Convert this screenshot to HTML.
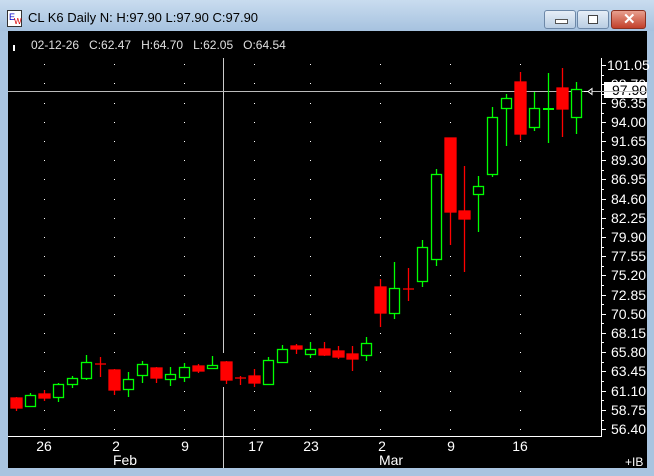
<!DOCTYPE html>
<html><head><style>
html,body{margin:0;padding:0;}
body{width:654px;height:476px;overflow:hidden;background:#a9c4e0;font-family:"Liberation Sans",sans-serif;position:relative;}
.tb{position:absolute;left:0;top:0;width:654px;height:31px;background:linear-gradient(#c9dcef,#a6c2df);}
.title{position:absolute;left:28px;top:10px;font-size:13px;color:#000;}
.btn{position:absolute;top:10px;height:17px;border:1px solid #6d88a8;border-radius:3px;background:linear-gradient(#e6eef7,#b9cde3);}
.chart{position:absolute;left:8px;top:31px;width:639px;height:437px;background:#000;}
</style></head><body>
<div class="tb"></div>
<svg style="position:absolute;left:7px;top:10px" width="17" height="17"><rect x="0.5" y="0.5" width="14" height="16" fill="#fff" stroke="#333"/><text x="2" y="10" font-size="9" fill="#00c" font-family="Liberation Sans">E</text><text x="7" y="14" font-size="8" fill="#d00" font-family="Liberation Sans">W</text></svg>
<div class="title">CL K6 Daily N: H:97.90 L:97.90 C:97.90</div>
<div class="btn" style="left:544px;width:30px"><div style="position:absolute;left:10px;top:8px;width:11px;height:3px;background:#fff;border:1px solid #555"></div></div>
<div class="btn" style="left:577px;width:30px"><div style="position:absolute;left:10px;top:4px;width:8px;height:7px;border:1px solid #444;background:#fff"></div></div>
<div class="btn" style="left:611px;width:33px;background:linear-gradient(#e8a08f,#c2402a);border-color:#8a3020"><div style="position:absolute;left:11px;top:-1px;color:#fff;font-weight:bold;font-size:15px">✕</div></div>
<div class="chart"></div>
<svg style="position:absolute;left:0;top:0" width="654" height="476" font-family="Liberation Sans">
<text x="31" y="49" font-size="12" fill="#e0e0e0">02-12-26&#160;&#160;&#160;C:62.47&#160;&#160;&#160;H:64.70&#160;&#160;&#160;L:62.05&#160;&#160;&#160;O:64.54</text>
<rect x="13" y="45" width="2" height="6" fill="#fff"/>
<g fill="#fff">
<g id="dc">
<rect x="44" y="64" width="1" height="1"/><rect x="44" y="83" width="1" height="1"/><rect x="44" y="103" width="1" height="1"/><rect x="44" y="122" width="1" height="1"/><rect x="44" y="141" width="1" height="1"/><rect x="44" y="160" width="1" height="1"/><rect x="44" y="179" width="1" height="1"/><rect x="44" y="199" width="1" height="1"/><rect x="44" y="218" width="1" height="1"/><rect x="44" y="237" width="1" height="1"/><rect x="44" y="256" width="1" height="1"/><rect x="44" y="275" width="1" height="1"/><rect x="44" y="295" width="1" height="1"/><rect x="44" y="314" width="1" height="1"/><rect x="44" y="333" width="1" height="1"/><rect x="44" y="352" width="1" height="1"/><rect x="44" y="371" width="1" height="1"/><rect x="44" y="391" width="1" height="1"/><rect x="44" y="410" width="1" height="1"/><rect x="44" y="429" width="1" height="1"/>
</g>
<use href="#dc" x="70"/><use href="#dc" x="140"/><use href="#dc" x="210"/><use href="#dc" x="266"/><use href="#dc" x="336"/><use href="#dc" x="406"/><use href="#dc" x="476"/>
</g>
<line x1="223.5" y1="58" x2="223.5" y2="353" stroke="#ccc"/>
<line x1="223.5" y1="387" x2="223.5" y2="468" stroke="#ccc"/>
<line x1="8" y1="436.5" x2="601" y2="436.5" stroke="#fff"/>
<line x1="601.5" y1="58" x2="601.5" y2="437" stroke="#fff"/>
<g stroke="#fff">
<path d="M601 65.5h5M601 84.5h5M601 103.5h5M601 122.5h5M601 141.5h5M601 160.5h5M601 179.5h5M601 199.5h5M601 218.5h5M601 237.5h5M601 256.5h5M601 275.5h5M601 295.5h5M601 314.5h5M601 333.5h5M601 352.5h5M601 371.5h5M601 391.5h5M601 410.5h5M601 429.5h5"/>
<path d="M601 75.5h3M601 94.5h3M601 113.5h3M601 132.5h3M601 151.5h3M601 170.5h3M601 189.5h3M601 209.5h3M601 228.5h3M601 247.5h3M601 266.5h3M601 285.5h3M601 304.5h3M601 323.5h3M601 342.5h3M601 362.5h3M601 381.5h3M601 400.5h3M601 420.5h3"/>
</g>
<g font-size="14" fill="#fff">
<text x="607" y="70">101.05</text><text x="611" y="89">98.70</text><text x="611" y="108">96.35</text><text x="611" y="127">94.00</text><text x="611" y="146">91.65</text><text x="611" y="165">89.30</text><text x="611" y="184">86.95</text><text x="611" y="204">84.60</text><text x="611" y="223">82.25</text><text x="611" y="242">79.90</text><text x="611" y="261">77.55</text><text x="611" y="280">75.20</text><text x="611" y="300">72.85</text><text x="611" y="319">70.50</text><text x="611" y="338">68.15</text><text x="611" y="357">65.80</text><text x="611" y="376">63.45</text><text x="611" y="396">61.10</text><text x="611" y="415">58.75</text><text x="611" y="434">56.40</text>
</g>
<rect x="604" y="82" width="43" height="16" fill="#fff"/>
<text x="612" y="95" font-size="14" fill="#000">97.90</text>
<line x1="8" y1="91.5" x2="647" y2="91.5" stroke="#bbb"/>
<path d="M584 91.5h4l4-3v6l-4-3" stroke="#fff" fill="#000"/>
<g font-size="14" fill="#fff" text-anchor="middle">
<text x="44" y="451">26</text><text x="116" y="451">2</text><text x="185" y="451">9</text><text x="256" y="451">17</text><text x="311" y="451">23</text><text x="382" y="451">2</text><text x="451" y="451">9</text><text x="520" y="451">16</text>
<text x="125" y="465">Feb</text><text x="391" y="465">Mar</text>
</g>
<text x="625" y="466" font-size="12" fill="#fff">+IB</text>
<g stroke-width="1.3">
<!-- candles: c, wt, wb, bt, bb -->
<g stroke="#f00" fill="#f00">
<line x1="16.5" y1="397" x2="16.5" y2="411"/><rect x="11" y="398" width="11" height="10"/>
<line x1="44.5" y1="390" x2="44.5" y2="401"/><rect x="39" y="394" width="11" height="4"/>
<line x1="100.5" y1="357" x2="100.5" y2="377"/><line x1="95" y1="364" x2="106" y2="364"/>
<line x1="114.5" y1="369" x2="114.5" y2="395"/><rect x="109" y="370" width="11" height="20"/>
<line x1="156.5" y1="367" x2="156.5" y2="383"/><rect x="151" y="368" width="11" height="10"/>
<line x1="198.5" y1="364" x2="198.5" y2="373"/><rect x="193" y="366" width="11" height="5"/>
<line x1="226.5" y1="361" x2="226.5" y2="384"/><rect x="221" y="362" width="11" height="18"/>
<line x1="240.5" y1="376" x2="240.5" y2="385"/><line x1="235" y1="378" x2="246" y2="378"/>
<line x1="254.5" y1="369" x2="254.5" y2="387"/><rect x="249" y="376" width="11" height="7"/>
<line x1="296.5" y1="344" x2="296.5" y2="354"/><rect x="291" y="346" width="11" height="3"/>
<line x1="324.5" y1="342" x2="324.5" y2="356"/><rect x="319" y="349" width="11" height="6"/>
<line x1="338.5" y1="346" x2="338.5" y2="359"/><rect x="333" y="351" width="11" height="6"/>
<line x1="352.5" y1="346" x2="352.5" y2="371"/><rect x="347" y="354" width="11" height="5"/>
<line x1="380.5" y1="279" x2="380.5" y2="327"/><rect x="375" y="287" width="11" height="26"/>
<line x1="408.5" y1="268" x2="408.5" y2="301"/><line x1="403" y1="289" x2="414" y2="289"/>
<line x1="450.5" y1="138" x2="450.5" y2="245"/><rect x="445" y="138" width="11" height="74"/>
<line x1="464.5" y1="166" x2="464.5" y2="272"/><rect x="459" y="211" width="11" height="8"/>
<line x1="520.5" y1="72" x2="520.5" y2="140"/><rect x="515" y="82" width="11" height="52"/>
<line x1="562.5" y1="68" x2="562.5" y2="137"/><rect x="557" y="88" width="11" height="21"/>
</g>
<g stroke="#0f0" fill="#000">
<line x1="30.5" y1="393" x2="30.5" y2="406"/><rect x="25.5" y="395.5" width="10" height="11"/>
<line x1="58.5" y1="383" x2="58.5" y2="402"/><rect x="53.5" y="384.5" width="10" height="13"/>
<line x1="72.5" y1="376" x2="72.5" y2="388"/><rect x="67.5" y="378.5" width="10" height="6"/>
<line x1="86.5" y1="355" x2="86.5" y2="380"/><rect x="81.5" y="362.5" width="10" height="16"/>
<line x1="128.5" y1="372" x2="128.5" y2="397"/><rect x="123.5" y="379.5" width="10" height="10"/>
<line x1="142.5" y1="361" x2="142.5" y2="383"/><rect x="137.5" y="364.5" width="10" height="11"/>
<line x1="170.5" y1="367" x2="170.5" y2="386"/><rect x="165.5" y="374.5" width="10" height="5"/>
<line x1="184.5" y1="363" x2="184.5" y2="382"/><rect x="179.5" y="367.5" width="10" height="10"/>
<line x1="212.5" y1="356" x2="212.5" y2="368"/><rect x="207.5" y="365.5" width="10" height="3"/>
<line x1="268.5" y1="357" x2="268.5" y2="385"/><rect x="263.5" y="360.5" width="10" height="24"/>
<line x1="282.5" y1="345" x2="282.5" y2="363"/><rect x="277.5" y="349.5" width="10" height="13"/>
<line x1="310.5" y1="342" x2="310.5" y2="358"/><rect x="305.5" y="349.5" width="10" height="5"/>
<line x1="366.5" y1="337" x2="366.5" y2="361"/><rect x="361.5" y="343.5" width="10" height="12"/>
<line x1="394.5" y1="262" x2="394.5" y2="319"/><rect x="389.5" y="288.5" width="10" height="25"/>
<line x1="422.5" y1="240" x2="422.5" y2="287"/><rect x="417.5" y="247.5" width="10" height="34"/>
<line x1="436.5" y1="169" x2="436.5" y2="266"/><rect x="431.5" y="174.5" width="10" height="85"/>
<line x1="478.5" y1="176" x2="478.5" y2="232"/><rect x="473.5" y="186.5" width="10" height="8"/>
<line x1="492.5" y1="107" x2="492.5" y2="177"/><rect x="487.5" y="117.5" width="10" height="57"/>
<line x1="506.5" y1="94" x2="506.5" y2="146"/><rect x="501.5" y="98.5" width="10" height="10"/>
<line x1="534.5" y1="92" x2="534.5" y2="131"/><rect x="529.5" y="108.5" width="10" height="19"/>
<line x1="548.5" y1="73" x2="548.5" y2="143"/><line x1="543" y1="109" x2="554" y2="109" stroke-width="2"/>
<line x1="576.5" y1="82" x2="576.5" y2="134"/><rect x="571.5" y="89.5" width="10" height="28"/>
</g>
</g>
</svg>
</body></html>
